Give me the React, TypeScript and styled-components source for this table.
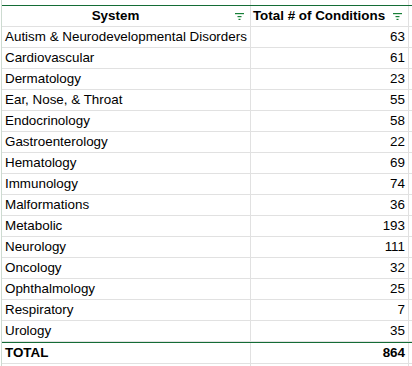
import styled, { createGlobalStyle } from 'styled-components';

const GlobalStyle = createGlobalStyle`
  body {
    margin: 0;
    background: #fff;
    font-family: 'Liberation Sans', Arial, sans-serif;
    color: #000;
  }
`;

const GRID = '#e1e1e1';
const FILTER_GREEN = '#146c36';

const rows: [string, number][] = [
  ['Autism & Neurodevelopmental Disorders', 63],
  ['Cardiovascular', 61],
  ['Dermatology', 23],
  ['Ear, Nose, & Throat', 55],
  ['Endocrinology', 58],
  ['Gastroenterology', 22],
  ['Hematology', 69],
  ['Immunology', 74],
  ['Malformations', 36],
  ['Metabolic', 193],
  ['Neurology', 111],
  ['Oncology', 32],
  ['Ophthalmology', 25],
  ['Respiratory', 7],
  ['Urology', 35],
];

const Sheet = styled.div`
  margin-left: 1px;
  border-left: 1px solid #cddbd1;
  width: 411px;
  overflow: hidden;
`;

const Row = styled.div<{ $height?: number; $topGreen?: boolean; $noBottom?: boolean }>`
  display: grid;
  grid-template-columns: 249px 158px 1fr;
  height: ${(p) => p.$height ?? 21}px;
  box-sizing: border-box;
  border-top: ${(p) => (p.$topGreen ? `1px solid ${FILTER_GREEN}` : 'none')};
  border-bottom: ${(p) => (p.$noBottom ? 'none' : `1px solid ${GRID}`)};
  font-size: 13.4px;
  line-height: 20px;
`;

const Cell = styled.div<{ $align?: 'left' | 'right'; $bold?: boolean }>`
  border-right: 1px solid ${GRID};
  padding: 0 3px;
  text-align: ${(p) => p.$align ?? 'left'};
  font-weight: ${(p) => (p.$bold ? 700 : 400)};
  white-space: nowrap;
  overflow: hidden;
`;

const Spare = styled.div``;

const HeadCell = styled.div`
  display: flex;
  align-items: center;
  border-right: 1px solid ${GRID};
  font-weight: 700;
  white-space: nowrap;
`;

const HeadLabel = styled.span`
  flex: 1;
  text-align: center;
`;

const FilterBtn = styled.span`
  display: flex;
  width: 20px;
  justify-content: center;
  margin-top: 1px;
  margin-right: 1px;
`;

const FilterIcon = () => (
  <FilterBtn>
    <svg width="9" height="7" viewBox="0 0 9 7" fill="#188038">
      <rect x="0" y="0" width="9" height="1.2" />
      <rect x="2.5" y="3" width="4" height="1.2" />
      <rect x="3.5" y="5.8" width="2" height="1.2" />
    </svg>
  </FilterBtn>
);

export default function App() {
  const total = rows.reduce((s, [, n]) => s + n, 0);
  return (
    <>
      <GlobalStyle />
      <Sheet>
        <Row $height={5} $noBottom>
          <Cell />
          <Cell />
          <Spare />
        </Row>
        <Row $height={22} $topGreen>
          <HeadCell>
            <HeadLabel>System</HeadLabel>
            <FilterIcon />
          </HeadCell>
          <HeadCell>
            <HeadLabel>Total # of Conditions</HeadLabel>
            <FilterIcon />
          </HeadCell>
          <Spare />
        </Row>
        {rows.map(([name, n]) => (
          <Row key={name}>
            <Cell>{name}</Cell>
            <Cell $align="right">{n}</Cell>
            <Spare />
          </Row>
        ))}
        <Row $height={22} $topGreen>
          <Cell $bold>TOTAL</Cell>
          <Cell $align="right" $bold>
            {total}
          </Cell>
          <Spare />
        </Row>
        <Row $height={4} $noBottom>
          <Cell />
          <Cell />
          <Spare />
        </Row>
      </Sheet>
    </>
  );
}
